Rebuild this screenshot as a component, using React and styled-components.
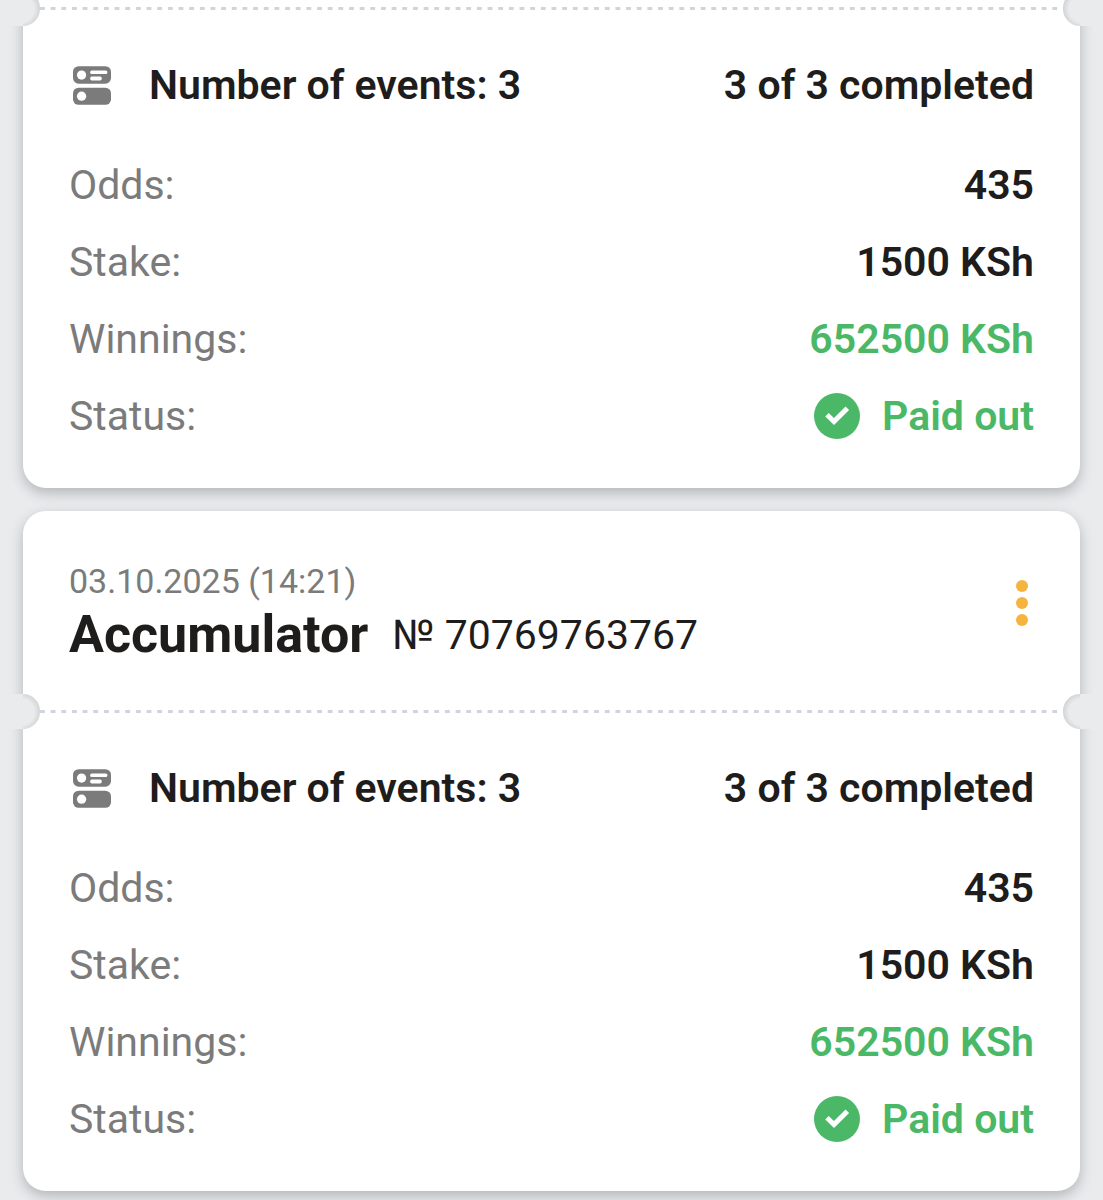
import React from "react";
import styled, { createGlobalStyle } from "styled-components";

const colors = {
  page: "#eaebed",
  card: "#ffffff",
  text: "#1f1c1c",
  muted: "#7b7b7b",
  green: "#4ab866",
  amber: "#f5b440",
  dash: "#d2d3dc",
  notchEdge: "#d3d4d7",
};

const GlobalStyle = createGlobalStyle`
  *, *::before, *::after { box-sizing: border-box; }
  body {
    margin: 0;
    background: ${colors.page};
    color: ${colors.text};
    font-family: Roboto, "Liberation Sans", sans-serif;
  }
  h2, h3, p, dl, dd { margin: 0; }
`;

const List = styled.main`
  display: flex;
  flex-direction: column;
  gap: 23px;
  padding: 0 23px 9px;
  overflow: hidden;
`;

const Card = styled.article`
  margin-top: ${({ $continued }) => ($continued ? "-9px" : "0")};
  background: ${colors.card};
  border-radius: ${({ $continued }) => ($continued ? "0 0 23px 23px" : "23px")};
  box-shadow: 0 5px 13px rgba(40, 42, 50, 0.28);
`;

const Head = styled.header`
  display: flex;
  justify-content: space-between;
  align-items: flex-start;
  padding: 50px 46px 26px;
`;

const DateText = styled.p`
  color: ${colors.muted};
  font-size: 34px;
  line-height: 41px;
`;

const TitleRow = styled.div`
  display: flex;
  align-items: center;
  gap: 24px;
  line-height: 66px;
`;

const Title = styled.h2`
  font-size: 52px;
  font-weight: 700;
`;

const TicketNumber = styled.span`
  font-size: 41px;
`;

const MenuButton = styled.button`
  display: flex;
  flex-direction: column;
  align-items: center;
  gap: 5px;
  margin-top: 13px;
  padding: 6px;
  border: 0;
  background: none;
  cursor: pointer;
`;

const Dot = styled.span`
  width: 12px;
  height: 12px;
  border-radius: 50%;
  background: ${colors.amber};
`;

const Perforation = styled.div`
  display: flex;
  align-items: center;
  margin: 0 -23px;
`;

const Notch = styled.span`
  flex: none;
  width: 40px;
  height: 35px;
  border-radius: ${({ $right }) => ($right ? "17px 0 0 17px" : "0 17px 17px 0")};
  background:
    linear-gradient(${colors.page}, ${colors.page}) ${({ $right }) => ($right ? "right" : "left")} / 23px 100% no-repeat,
    radial-gradient(
      circle at ${({ $right }) => ($right ? "19px" : "21px")} 18px,
      ${colors.page} 13px,
      ${colors.notchEdge} 19px
    );
`;

const DashedLine = styled.span`
  flex: 1;
  height: 3px;
  background: linear-gradient(90deg, ${colors.dash} 50%, transparent 50%) 0 0 / calc(100% / 96) 3px;
`;

const Body = styled.section`
  padding: 35px 46px 48px;
`;

const Events = styled.div`
  display: flex;
  align-items: center;
  justify-content: space-between;
  margin-bottom: 52px;
  font-size: 41px;
  line-height: 48px;
  font-weight: 600;
`;

const EventsTitle = styled.h3`
  display: flex;
  align-items: center;
  gap: 38px;
  padding-left: 4px;
  font-size: 41px;
  font-weight: 600;
`;

const Details = styled.dl`
  display: flex;
  flex-direction: column;
  gap: 29px;
`;

const Row = styled.div`
  display: flex;
  align-items: center;
  justify-content: space-between;
  font-size: 41px;
  line-height: 48px;
`;

const Label = styled.dt`
  color: ${colors.muted};
`;

const Value = styled.dd`
  display: flex;
  align-items: center;
  gap: 22px;
  color: ${({ $positive }) => ($positive ? colors.green : colors.text)};
  font-weight: 600;
`;

function EventsIcon() {
  return (
    <svg width="38" height="39" viewBox="0 0 115 117" aria-hidden="true">
      <rect width="115" height="53" rx="17" fill="#7b7b7b" />
      <rect y="65" width="115" height="52" rx="17" fill="#7b7b7b" />
      <circle cx="26" cy="27" r="14" fill="#fff" />
      <circle cx="26" cy="91" r="14" fill="#fff" />
      <rect x="52" y="13" width="52" height="11" rx="5" fill="#fff" />
      <rect x="52" y="31" width="35" height="12" rx="5" fill="#fff" />
    </svg>
  );
}

function PaidIcon() {
  return (
    <svg width="46" height="46" viewBox="0 0 46 46" aria-hidden="true">
      <circle cx="23" cy="23" r="23" fill={colors.green} />
      <path d="M13 21.8l7 6.8L33.3 15.2" fill="none" stroke="#fff" strokeWidth="5" />
    </svg>
  );
}

function Ticket({ ticket }) {
  const { continued, date, type, number, events, completed, odds, stake, winnings, status } = ticket;
  return (
    <Card $continued={continued}>
      {!continued && (
        <Head>
          <div>
            <DateText>{date}</DateText>
            <TitleRow>
              <Title>{type}</Title>
              <TicketNumber>№ {number}</TicketNumber>
            </TitleRow>
          </div>
          <MenuButton type="button" aria-label="Ticket actions">
            <Dot />
            <Dot />
            <Dot />
          </MenuButton>
        </Head>
      )}
      <Perforation>
        <Notch />
        <DashedLine />
        <Notch $right />
      </Perforation>
      <Body>
        <Events>
          <EventsTitle>
            <EventsIcon />
            Number of events: {events}
          </EventsTitle>
          <span>
            {completed} of {events} completed
          </span>
        </Events>
        <Details>
          <Row>
            <Label>Odds:</Label>
            <Value>{odds}</Value>
          </Row>
          <Row>
            <Label>Stake:</Label>
            <Value>{stake} KSh</Value>
          </Row>
          <Row>
            <Label>Winnings:</Label>
            <Value $positive>{winnings} KSh</Value>
          </Row>
          <Row>
            <Label>Status:</Label>
            <Value $positive>
              <PaidIcon />
              {status}
            </Value>
          </Row>
        </Details>
      </Body>
    </Card>
  );
}

const result = { events: 3, completed: 3, odds: 435, stake: 1500, winnings: 652500, status: "Paid out" };

const tickets = [
  { id: "previous", continued: true, ...result },
  { id: "current", date: "03.10.2025 (14:21)", type: "Accumulator", number: "70769763767", ...result },
];

export default function App() {
  return (
    <>
      <GlobalStyle />
      <List>
        {tickets.map((ticket) => (
          <Ticket key={ticket.id} ticket={ticket} />
        ))}
      </List>
    </>
  );
}
